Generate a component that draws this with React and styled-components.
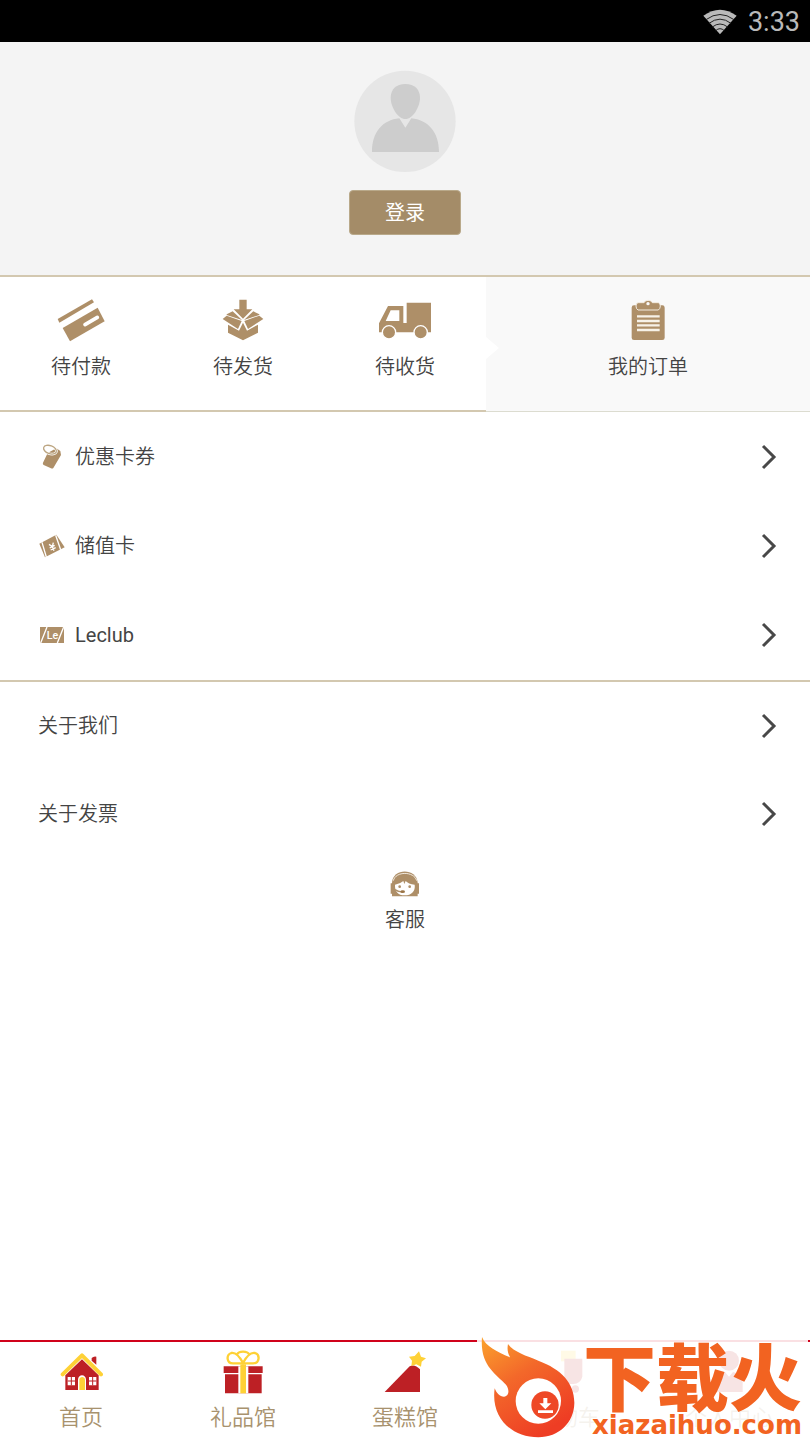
import React from 'react'
import styled, { createGlobalStyle } from 'styled-components'

const GlobalStyle = createGlobalStyle`
  * {
    box-sizing: border-box;
  }
  body {
    margin: 0;
    background: #fff;
    color: #444;
    font-family: Roboto, 'Noto Sans CJK SC', sans-serif;
    font-size: 20px;
    font-weight: 350;
    line-height: 30px;
  }
  a {
    color: inherit;
    text-decoration: none;
  }
  svg {
    display: block;
    flex: none;
  }
`
const Page = styled.div`
  display: flex;
  flex-direction: column;
  min-height: 100vh;
`
const StatusBar = styled.div`
  height: 42px;
  padding: 2px 10px 0;
  display: flex;
  align-items: center;
  justify-content: flex-end;
  gap: 11px;
  background: #000;
  color: #b9b9b9;
  font-size: 27px;
  font-weight: 400;
`
const Profile = styled.header`
  display: flex;
  flex-direction: column;
  align-items: center;
  gap: 18px;
  padding: 28px 0 40px;
  background: #f4f4f4;
  border-bottom: 2px solid #d3c8b0;
`
const LoginButton = styled.button`
  width: 112px;
  height: 45px;
  padding: 0;
  border: 1px solid #b9a98a;
  border-radius: 4px;
  background: #a48c68;
  color: #fff;
  font: inherit;
  font-weight: 400;
  cursor: pointer;
`
const Orders = styled.nav`
  display: grid;
  grid-template-columns: repeat(3, 1fr) 2fr;
  height: 135px;
`
const OrderLink = styled.a`
  display: flex;
  flex-direction: column;
  align-items: center;
  padding-top: 22px;
  gap: 9px;
  border-bottom: 2px solid #d3c8b0;
  svg {
    height: 44px;
  }
`
const AllOrders = styled(OrderLink)`
  position: relative;
  background: #f9f9f9;
  border-bottom: 1px solid #dcdcd0;
  &::before {
    content: '';
    position: absolute;
    left: 0;
    top: 60px;
    border: 11px solid transparent;
    border-left: 13px solid #fff;
    border-right: 0;
  }
`
const Menu = styled.nav`
  padding-bottom: ${p => (p.$line ? '1px' : '0')};
  border-bottom: ${p => (p.$line ? '2px solid #d3c8b0' : '0')};
`
const MenuRow = styled.a`
  display: flex;
  align-items: center;
  height: ${p => (p.$plain ? '88px' : '89px')};
  padding: 0 33px 0 38px;
  span {
    flex: 1;
  }
  span:lang(en) {
    font-weight: 400;
  }
`
const MenuIcon = styled.div`
  display: flex;
  justify-content: center;
  width: 27px;
  margin-right: 10px;
`
const Service = styled.a`
  display: flex;
  flex-direction: column;
  align-items: center;
  align-self: center;
  gap: 8px;
  padding-top: 13px;
`
const TabBar = styled.nav`
  position: relative;
  display: grid;
  grid-template-columns: repeat(5, 1fr);
  height: 100px;
  margin-top: auto;
  border-top: 2px solid #d0021b;
`
const Tab = styled.a`
  display: flex;
  flex-direction: column;
  align-items: center;
  gap: 9px;
  padding-top: 8px;
  color: #a8926e;
  font-size: 22px;
  svg {
    height: 44px;
  }
`
const Badge = styled.div`
  position: absolute;
  right: 2px;
  bottom: 0;
  width: 331px;
  height: 104px;
  display: flex;
  padding-left: 4px;
  background: rgba(255, 255, 255, 0.88);
`
const BadgeText = styled.div`
  flex: 1;
  display: flex;
  flex-direction: column;
  align-items: flex-end;
  padding-right: 6px;
  color: #f26321;
  white-space: nowrap;
  strong {
    padding-top: 12px;
    font-size: 73px;
    font-weight: 900;
    line-height: 64px;
  }
  small {
    font-family: 'DejaVu Sans', sans-serif;
    font-size: 26px;
    font-weight: 700;
    line-height: 26px;
  }
`

const GOLD = '#ae8f68'
const RED = '#bd2025'
const YELLOW = '#fed136'

const WifiIcon = () => (
  <svg width="34" height="26" viewBox="0 0 102 78">
    <path d="M1 20Q51-16 101 20L51 76Z" fill="#b9b9b9" />
    <path d="M9 32Q51 1 93 32M18 43Q51 18 84 43M28 54Q51 36 74 54M38 65Q51 53 64 65" fill="none" stroke="#222" strokeWidth="3" />
  </svg>
)
const Avatar = () => (
  <svg width="102" height="102" viewBox="0 0 306 306">
    <circle cx="153" cy="154" r="152" fill="#e6e6e6" />
    <path d="M154 42c28 0 44 17 44 41 0 28-22 64-44 64s-44-36-44-64c0-24 16-41 44-41Z" fill="#cdcdcd" />
    <path d="M54 246c0-60 32-96 82-101l18 28 18-28c50 5 83 41 83 101Z" fill="#cdcdcd" />
  </svg>
)
const CardIcon = () => (
  <svg width="48" viewBox="81 87 144 132" fill={GOLD}>
    <path d="M83 147 186 88l6 9L88 158Z" />
    <path d="m98 174 105-61 21 41-104 60Z" />
    <path d="m165 164 37-22" stroke="#fff" strokeWidth="11" strokeLinecap="round" />
  </svg>
)
const BoxIcon = () => (
  <svg width="42" viewBox="577 87 126 132" fill={GOLD}>
    <path d="M629 89h22v29h17l-28 28-28-28h17Z" />
    <path d="m591 133 18-9 28 26-46-15Z" />
    <path d="m689 133-18-9-28 26 46-15Z" />
    <path d="m579 147 12-10 45 16-11 24Z" />
    <path d="m701 147-12-10-45 16 11 24Z" />
    <path d="m595 164 33 18 12-24 12 24 33-18v24l-45 23-45-23Z" />
  </svg>
)
const TruckIcon = () => (
  <svg width="54" viewBox="84 87 162 132" fill={GOLD}>
    <path fillRule="evenodd" d="M114 108h46v51h10V98h73v89H87v-27ZM122 121l-15 32h41v-32Z" />
    <g stroke="#fff" strokeWidth="4">
      <circle cx="117" cy="187" r="20" />
      <circle cx="212" cy="187" r="20" />
    </g>
  </svg>
)
const ClipboardIcon = () => (
  <svg width="34" viewBox="121 87 102 132" fill={GOLD}>
    <rect x="123" y="106" width="99" height="104" rx="7" />
    <path d="M142 98h18c4-9 21-9 25 0h18q6 2 6 10t-6 12h-61q-6-3-6-12t6-10Z" stroke="#f3ece0" strokeWidth="3" />
    <circle cx="172" cy="101" r="5" fill="#f9f9f9" />
    <path d="M139 139h68M139 153h68M139 166h68M139 180h68" stroke="#f7f2e8" strokeWidth="7" />
  </svg>
)
const TagIcon = () => (
  <svg width="20" height="26" viewBox="66 41 60 78">
    <path d="m83 68 26-14 12 8 2 12-23 39q-3 3-7 1L71 104q-4-3-2-7Z" fill={GOLD} />
    <ellipse cx="90" cy="58" rx="20" ry="12" transform="rotate(20 90 58)" fill="none" stroke="#fff" strokeWidth="8" />
    <ellipse cx="90" cy="58" rx="20" ry="12" transform="rotate(20 90 58)" fill="none" stroke="#bca581" strokeWidth="4" />
  </svg>
)
const TicketIcon = () => (
  <svg width="26" height="24" viewBox="56 308 78 72">
    <path d="m57 337 51-27 25 38-59 30Z" fill={GOLD} />
    <path d="m65 333 13 44M106 312l15 43" stroke="#fff" strokeWidth="4" />
    <path d="m86 339 10 7 3-12M96 346l5 12M88 350l15-8M91 356l15-7" fill="none" stroke="#fff" strokeWidth="4" />
  </svg>
)
const LeIcon = () => (
  <svg width="24" height="16" viewBox="0 0 72 48">
    <path d="M0 0h72v48H0Z" fill={GOLD} />
    <path d="M2 48 21 0M52 48 71 0" stroke="#fff" strokeWidth="4" />
    <text x="20" y="37" fill="#fff" fontSize="32" fontWeight="500">Le</text>
  </svg>
)
const ServiceIcon = () => (
  <svg width="30" height="26" viewBox="60 35 90 78">
    <path d="M66 111V70c2-45 74-45 77 0v41Z" fill={GOLD} />
    <path d="M62 72h7v31h-7ZM141 72h6v31h-6Z" fill={GOLD} />
    <path d="M70 64c7-29 62-29 70 0" fill="none" stroke="#f2eadf" strokeWidth="3" />
    <path d="M75 76q15-2 25-11l3 9 4-9q8 9 27 11c3 20-10 32-30 32S74 96 75 76Z" fill="#fff" />
    <circle cx="89" cy="82" r="4" fill={GOLD} />
    <circle cx="119" cy="82" r="4" fill={GOLD} />
    <path d="M75 91q12 8 24 6" fill="none" stroke={GOLD} strokeWidth="4" />
    <ellipse cx="98" cy="97" rx="7" ry="4" fill="#9b7445" />
  </svg>
)
const Chevron = () => (
  <svg width="16" height="26" viewBox="0 0 16 26" fill="none" stroke="#484848" strokeWidth="3">
    <path d="m2 2 11 11L2 24" />
  </svg>
)
const HomeIcon = () => (
  <svg width="44" viewBox="58 64 132 132">
    <path d="M156 88q6-6 14-4v24l-14-12Z" fill={RED} />
    <path d="m127 92 50 48v44H77v-44Z" fill={RED} />
    <path d="m69 137 58-57 57 57" fill="none" stroke={YELLOW} strokeWidth="12" strokeLinecap="round" strokeLinejoin="round" />
    <path d="M115 184v-31c0-18 24-18 24 0v31Z" fill="#fff" />
    <path d="M119 184v-31c0-11 17-11 17 0v31Z" fill={YELLOW} />
    <path d="M84 145h22v25H84ZM148 145h22v25h-22Z" fill="#fff" />
    <path d="M95 145v25M84 157h22M159 145v25M148 157h22" stroke={RED} strokeWidth="3" />
  </svg>
)
const GiftIcon = () => (
  <svg width="40" viewBox="550 61 120 132">
    <path d="M552 110h117v20H552ZM556 134h110v57H556Z" fill={RED} />
    <path d="M596 110h30v81h-30Z" fill="#fff" />
    <path d="M602 104h17v87h-17Z" fill={YELLOW} />
    <path d="M610 101h-30c-20 0-21-26-5-31 15-3 25 11 35 30 10-19 20-33 36-30 16 5 14 31-6 31ZM592 75c5-12 31-12 37 0" fill="none" stroke={YELLOW} strokeWidth="7" />
  </svg>
)
const CakeIcon = () => (
  <svg width="42" viewBox="102 62 126 132">
    <path d="m104 188 75-77q15-8 31 9v68Z" fill={RED} />
    <path d="m207 66 6 16 15 5-13 10-2 15-14-7-15 5 2-16-9-12 17-2Z" fill={YELLOW} />
  </svg>
)
const CartIcon = () => (
  <svg width="44" viewBox="0 0 132 132">
    <path d="M48 2h44v32H48Z" fill={YELLOW} />
    <path d="M58 26h54v54q-5 20-27 22H28V82h30Z" fill={RED} />
    <circle cx="45" cy="117" r="11" fill={RED} />
    <circle cx="91" cy="117" r="11" fill={RED} />
  </svg>
)
const UserIcon = () => (
  <svg width="44" viewBox="0 0 132 132">
    <circle cx="66" cy="32" r="30" fill={RED} />
    <path d="M25 126V94q4-24 29-28l12 14 12-14q25 4 29 28v32Z" fill={RED} />
  </svg>
)
const FlameLogo = () => (
  <svg width="94" height="104" viewBox="33 13 282 312">
    <defs>
      <linearGradient id="flame" x1="0" y1="0" x2="0.6" y2="1">
        <stop offset="0" stopColor="#fba22d" />
        <stop offset="0.45" stopColor="#f3682a" />
        <stop offset="1" stopColor="#ee3d24" />
      </linearGradient>
    </defs>
    <path d="M36 16c12 29 43 43 84 61-7-14-9-25-6-40 18 25 55 35 91 50 70 26 109 68 108 128-1 58-46 102-108 102-83 0-143-61-131-147 6 15 15 25 28 25 17-1 16-24 6-36C76 125 29 101 36 16Z" fill="url(#flame)" />
    <circle cx="205" cy="208" r="68" fill="#fff" />
    <circle cx="225" cy="220" r="41" fill="#ee4826" />
    <path d="M220 199h12v16h12l-18 18-18-18h12ZM204 236h45v8h-45Z" fill="#fff" />
  </svg>
)

const orders = [
  { name: '待付款', Icon: CardIcon },
  { name: '待发货', Icon: BoxIcon },
  { name: '待收货', Icon: TruckIcon },
]
const cards = [
  { name: '优惠卡券', lang: 'zh', Icon: TagIcon },
  { name: '储值卡', lang: 'zh', Icon: TicketIcon },
  { name: 'Leclub', lang: 'en', Icon: LeIcon },
]
const tabs = [
  { name: '首页', Icon: HomeIcon },
  { name: '礼品馆', Icon: GiftIcon },
  { name: '蛋糕馆', Icon: CakeIcon },
  { name: '购物车', Icon: CartIcon },
  { name: '个人中心', Icon: UserIcon },
]

function App() {
  return (
    <Page>
      <GlobalStyle />
      <StatusBar>
        <WifiIcon />
        <time>3:33</time>
      </StatusBar>
      <Profile>
        <Avatar />
        <LoginButton>登录</LoginButton>
      </Profile>
      <Orders>
        {orders.map(({ name, Icon }) => (
          <OrderLink href="#" key={name}>
            <Icon />
            <span>{name}</span>
          </OrderLink>
        ))}
        <AllOrders href="#">
          <ClipboardIcon />
          <span>我的订单</span>
        </AllOrders>
      </Orders>
      <Menu $line>
        {cards.map(({ name, lang, Icon }) => (
          <MenuRow href="#" key={name}>
            <MenuIcon>
              <Icon />
            </MenuIcon>
            <span lang={lang}>{name}</span>
            <Chevron />
          </MenuRow>
        ))}
      </Menu>
      <Menu>
        {['关于我们', '关于发票'].map(name => (
          <MenuRow href="#" key={name} $plain>
            <span>{name}</span>
            <Chevron />
          </MenuRow>
        ))}
      </Menu>
      <Service href="#">
        <ServiceIcon />
        <span>客服</span>
      </Service>
      <TabBar>
        {tabs.map(({ name, Icon }) => (
          <Tab href="#" key={name}>
            <Icon />
            <span>{name}</span>
          </Tab>
        ))}
        <Badge>
          <FlameLogo />
          <BadgeText>
            <strong>下载火</strong>
            <small>xiazaihuo.com</small>
          </BadgeText>
        </Badge>
      </TabBar>
    </Page>
  )
}

export default App
